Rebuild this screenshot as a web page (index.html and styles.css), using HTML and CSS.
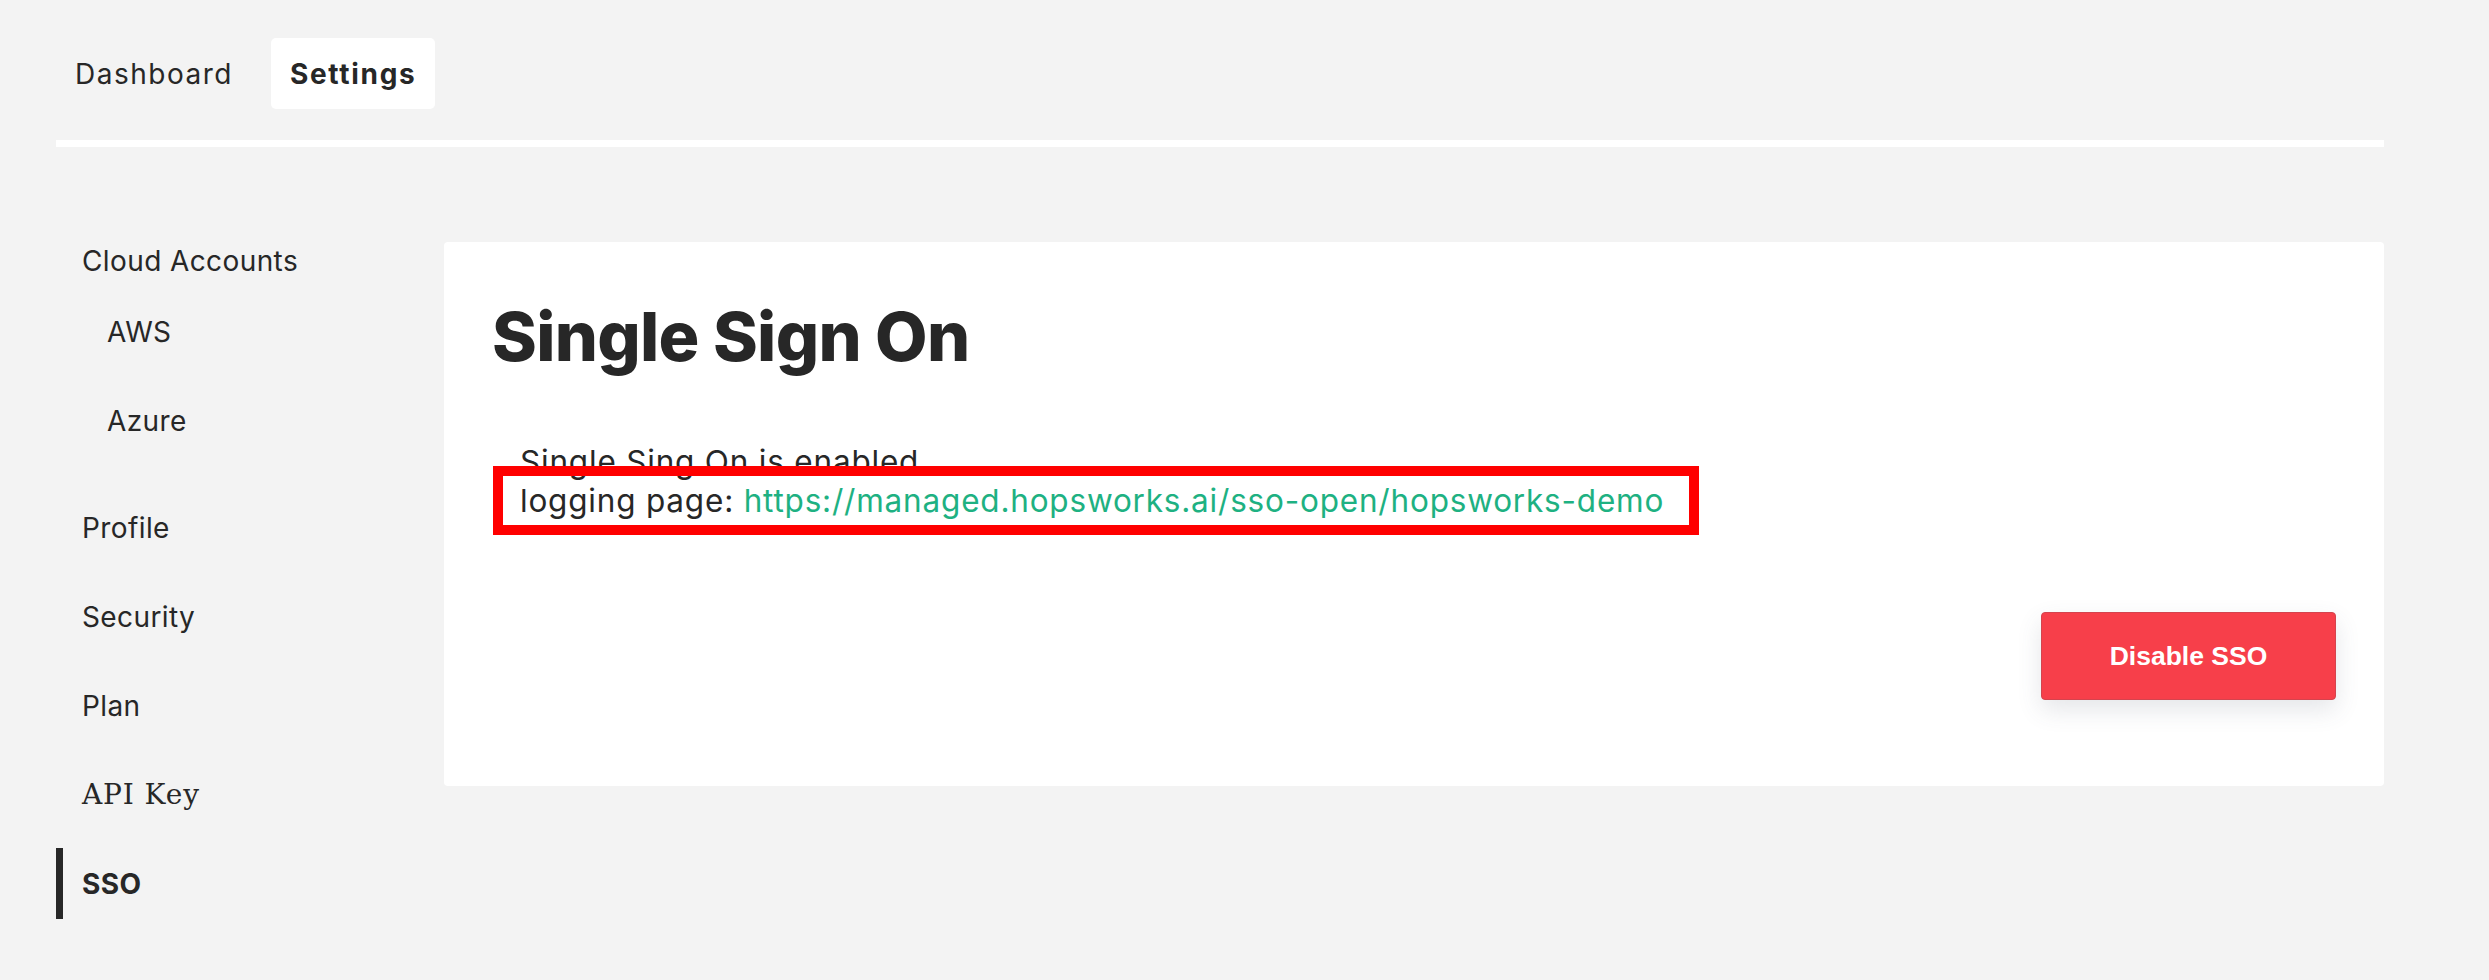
FILE: index.html
```html
<!DOCTYPE html>
<html lang="en">
<head>
<meta charset="utf-8">
<title>Settings - SSO</title>
<link rel="stylesheet" href="styles.css">
</head>
<body>
<div class="page">
  <nav class="tabs">
    <a class="tab">Dashboard</a>
    <a class="tab tab-active">Settings</a>
  </nav>
  <div class="divider"></div>
  <div class="main">
    <aside class="side">
      <div class="nav-group">
        <div class="nav-item">Cloud Accounts</div>
        <div class="sub-list">
          <div class="nav-item sub">AWS</div>
          <div class="nav-item sub">Azure</div>
        </div>
      </div>
      <div class="nav-item">Profile</div>
      <div class="nav-item">Security</div>
      <div class="nav-item">Plan</div>
      <div class="nav-item serif">API Key</div>
      <div class="nav-item active">SSO</div>
    </aside>
    <section class="card">
      <h1 class="title">Single Sign On</h1>
      <div class="info">
        <div class="info-line">Single Sing On is enabled</div>
        <div class="info-line highlight">logging page: <a class="link">https://managed.hopsworks.ai/sso-open/hopsworks-demo</a></div>
      </div>
      <button class="btn-danger">Disable SSO</button>
    </section>
  </div>
</div>
</body>
</html>
```

FILE: styles.css
```css
html, body {
  margin: 0;
  padding: 0;
  background: #f3f3f3;
}
body {
  font-family: "Inter", "Noto Sans", sans-serif;
  color: #272727;
}
.page {
  width: 2328px;
  padding: 38px 0 0 56px;
}
.tabs {
  display: flex;
  gap: 19px;
}
.tab {
  height: 71px;
  padding: 0 19px;
  display: flex;
  align-items: center;
  font-size: 28px;
  letter-spacing: 1.5px;
  border-radius: 5px;
  color: #272727;
  cursor: pointer;
}
.tab-active {
  background: #ffffff;
  font-weight: 700;
  letter-spacing: 1.7px;
}
.divider {
  height: 7px;
  margin-top: 31px;
  background: #ffffff;
}
.main {
  display: flex;
  align-items: flex-start;
  margin-top: 78px;
}
.side {
  width: 388px;
  flex: none;
  display: flex;
  flex-direction: column;
  gap: 18px;
}
.nav-group {
  display: flex;
  flex-direction: column;
  padding-bottom: 18px;
}
.sub-list {
  display: flex;
  flex-direction: column;
  gap: 18px;
}
.nav-item {
  height: 71px;
  display: flex;
  align-items: center;
  padding-left: 26px;
  font-size: 28px;
  letter-spacing: 0.4px;
  box-sizing: border-box;
}
.nav-item.sub {
  padding-left: 51px;
}
.nav-item.serif {
  font-family: "DejaVu Serif", serif;
  font-size: 28px;
  letter-spacing: 0.9px;
}
.nav-item.active {
  border-left: 7px solid #272727;
  padding-left: 19px;
  font-weight: 700;
}
.card {
  flex: 1;
  margin-top: 17px;
  height: 544px;
  box-sizing: border-box;
  background: #ffffff;
  border-radius: 4px;
  padding: 54px 48px 0 48px;
  display: flex;
  flex-direction: column;
}
.title {
  margin: 0 0 64px 0;
  font-size: 68px;
  line-height: 1.2;
  font-weight: 800;
  letter-spacing: -0.7px;
  color: #272727;
}
.info {
  padding-left: 28px;
  font-size: 31.5px;
  line-height: 1.25;
  letter-spacing: 0.8px;
}
.info-line.highlight {
  position: relative;
  width: fit-content;
}
.info-line.highlight::after {
  content: "";
  position: absolute;
  top: -15px;
  bottom: -15px;
  left: -27px;
  right: -35px;
  border: 10px solid #ff0000;
}
.link {
  color: #1eb182;
}
.btn-danger {
  align-self: flex-end;
  margin-top: 92px;
  width: 295px;
  height: 88px;
  background: #f73f4a;
  border: 1px solid #d4444e;
  border-radius: 4px;
  color: #ffffff;
  font-family: "Liberation Sans", Arial, sans-serif;
  font-weight: 700;
  font-size: 26.5px;
  box-shadow: 0 10px 24px rgba(70, 80, 100, 0.14);
  cursor: pointer;
}
```
